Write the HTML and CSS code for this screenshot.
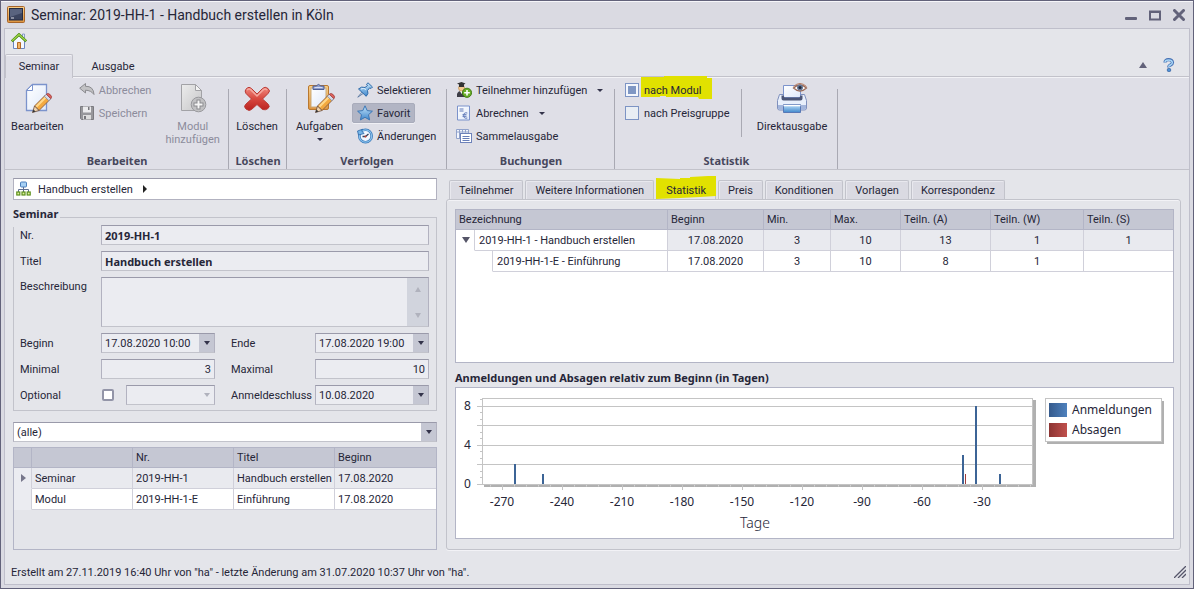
FILE: index.html
```html
<!DOCTYPE html>
<html lang="de">
<head>
<meta charset="utf-8">
<title>Seminar: 2019-HH-1 - Handbuch erstellen in Köln</title>
<link rel="stylesheet" href="styles.css">
</head>
<body>
<svg class="defs" width="0" height="0" aria-hidden="true">
  <defs>
    <linearGradient id="paper" x1="0" y1="0" x2="1" y2="1"><stop offset="0" stop-color="#fff"/><stop offset="1" stop-color="#dfe9fa"/></linearGradient>
    <linearGradient id="grey" x1="0" y1="0" x2="1" y2="1"><stop offset="0" stop-color="#ececec"/><stop offset="1" stop-color="#c6c6c8"/></linearGradient>
    <linearGradient id="red" x1="0" y1="0" x2="0" y2="1"><stop offset="0" stop-color="#f08a80"/><stop offset=".5" stop-color="#d8483f"/><stop offset="1" stop-color="#b9221f"/></linearGradient>
    <linearGradient id="blue" x1="0" y1="0" x2="0" y2="1"><stop offset="0" stop-color="#c4e4fa"/><stop offset="1" stop-color="#3f87cc"/></linearGradient>
    <linearGradient id="orange" x1="0" y1="0" x2="0" y2="1"><stop offset="0" stop-color="#f8d08a"/><stop offset="1" stop-color="#dd9440"/></linearGradient>
    <linearGradient id="barBlue"><stop offset="0" stop-color="#355a8c"/><stop offset="1" stop-color="#4f81bd"/></linearGradient>
    <linearGradient id="barRed"><stop offset="0" stop-color="#8c3432"/><stop offset="1" stop-color="#c0504d"/></linearGradient>
    <g id="pencil">
      <path d="M2 13.500L13 2.500l4.500 4.500L6.500 18z" fill="#f3a93f" stroke="#8a5a3a" stroke-width=".9"/>
      <path d="M3 13.500L13 3.500l1.500 1.500L4.500 15z" fill="#ffd88a"/>
      <path d="M11.800 3.700l4.500 4.500 2-2-4.500-4.500z" fill="#d5dbe8" stroke="#77809c" stroke-width=".7"/>
      <path d="M13.800 1.700q1.700-1.700 4 .5t.5 4z" fill="#e2645c" stroke="#9a3b3b" stroke-width=".8"/>
      <path d="M0 20l2-6.500 4.500 4.500z" fill="#f0d4ae" stroke="#6b4c3c" stroke-width=".8"/>
      <path d="M0 20l1-3 2 2z" fill="#333"/>
    </g>
  </defs>
</svg>
<div class="window">
  <header class="titlebar">
    <svg width="20" height="20" viewBox="0 0 20 20"><rect x="1.500" y="1.500" width="17" height="16" rx="1" fill="url(#orange)" stroke="#a8652a"/><rect x="3.500" y="3.500" width="13" height="11.500" fill="#3c4560" stroke="#262c42"/><path d="M4 4h12v4L4 12z" fill="#59637f"/><path d="M5 13h3" stroke="#d8d8e0"/></svg>
    <h1 class="title">Seminar: 2019-HH-1 - Handbuch erstellen in Köln</h1>
    <button class="bare" aria-label="Minimieren"><svg width="12" height="12"><rect y="8" width="12" height="3" rx="1" fill="#62627a"/></svg></button>
    <button class="bare" aria-label="Maximieren"><svg width="12" height="12"><path d="M1 3h10v7.500H1z" fill="none" stroke="#62627a" stroke-width="2"/><path d="M0 2.500h12" stroke="#62627a" stroke-width="2"/></svg></button>
    <button class="bare" aria-label="Schließen"><svg width="12" height="12"><path d="M1.500 1.500l9 9m0-9l-9 9" stroke="#62627a" stroke-width="3" stroke-linecap="round"/></svg></button>
  </header>
  <div class="client">
    <div class="quickbar">
      <button class="bare" aria-label="Start"><svg width="16" height="16" viewBox="0 0 16 16"><path d="M2.500 7.500v8h11v-8L8 2.500z" fill="#f4f8ff" stroke="#6c86c0"/><path d="M11.500 1h2v4h-2z" fill="#e8f0ff" stroke="#7389bd" stroke-width=".8"/><path d="M6.500 15.500v-6h3v6z" fill="#f2b467" stroke="#b46a25"/><path d="M.8 8.300L8 1.600l7.200 6.700" fill="none" stroke="#4b8a12" stroke-width="2.800"/><path d="M1.200 7.700L8 1.500l6.800 6.200" fill="none" stroke="#a2d84a" stroke-width="1.200"/></svg></button>
    </div>
    <nav class="ribbon-tabs">
      <button class="rtab active">Seminar</button>
      <button class="rtab">Ausgabe</button>
      <span class="spacer"></span>
      <button class="bare" aria-label="Menüband minimieren"><svg width="8" height="6"><path d="M0 6l4-6 4 6z" fill="#62627a"/></svg></button>
      <button class="bare" aria-label="Hilfe"><svg width="12" height="14" viewBox="0 0 12 14"><path d="M2 4.500Q2 1.700 5.500 1.700T9.500 4.500Q9.500 6 7.500 7T6 9.300" fill="none" stroke="#4470b4" stroke-width="3.200"/><path d="M2 4.300Q2 1.900 5.500 1.900T9.400 4.500Q9.400 6 7.400 7T6 9" fill="none" stroke="#a9d6f5" stroke-width="1.500"/><circle cx="6" cy="12" r="1.800" fill="#4e92d6" stroke="#315d9e" stroke-width=".7"/></svg></button>
    </nav>
    <div class="ribbon">
      <section class="rgroup g-edit">
        <div class="rbody">
          <button class="big"><svg width="32" height="32" viewBox="0 0 32 32"><path d="M5.500 8.500l6-6h14v26h-20z" fill="url(#paper)" stroke="#7b93cc" stroke-width="1.300"/><path d="M5.500 8.500h6v-6z" fill="#fff" stroke="#7b93cc"/><use href="#pencil" x="11.500" y="10.500"/></svg><span>Bearbeiten</span></button>
          <div class="stack">
            <button class="small off"><svg width="16" height="16" viewBox="0 0 16 16"><path d="M.7 6.200L6.500 1.500v2.800Q14.500 4 15 12.500 12 8.300 6.500 8.200v2.800z" fill="#c2c2c4" stroke="#8c8c90"/></svg>Abbrechen</button>
            <button class="small off"><svg width="16" height="16" viewBox="0 0 16 16"><path d="M1.500 1.500h13v13h-12l-1-1z" fill="#97979b" stroke="#7b7b80"/><rect x="4" y="1.500" width="8" height="6" fill="#ececee"/><rect x="4" y="10" width="8" height="4.500" fill="#ddd"/><rect x="9" y="2" width="1.500" height="3" fill="#77777c"/><rect x="5" y="11" width="2" height="3" fill="#77777c"/></svg>Speichern</button>
          </div>
          <button class="big off"><svg width="32" height="32" viewBox="0 0 32 32"><path d="M4.500 2.500h14l6 6v20h-20z" fill="url(#grey)" stroke="#a2a2a6"/><path d="M18.500 2.500v6h6z" fill="#f4f4f4" stroke="#a2a2a6"/><circle cx="21.500" cy="22.500" r="7.300" fill="#c1c1c3" stroke="#98989c"/><path d="M21.500 17.500v10M16.500 22.500h10" stroke="#8b8b8f" stroke-width="4"/><path d="M21.500 18.500v8M17.500 22.500h8" stroke="#f5f5f5" stroke-width="2"/></svg><span>Modul<br>hinzufügen</span></button>
        </div>
        <h2>Bearbeiten</h2>
      </section>
      <section class="rgroup g-delete">
        <div class="rbody"><button class="big"><svg width="32" height="32" viewBox="0 0 32 32"><path d="M5.500 6.500Q8 4 10.500 6.500L16 12l5.500-5.500Q24 4 27 6.500t0 5l-5.500 5.500L27 22q2.500 2.500 0 4.500t-5.500 1L16 22.500 10.500 27.500Q8 29.500 5 27t0-5l5.500-5L5 11.500Q3 9 5.500 6.500z" fill="url(#red)" stroke="#b93a35"/><path d="M6 8q2-2 4 0l6 6 6-6q2-2 4 0" fill="none" stroke="#f4a89f" stroke-width="1.500"/></svg><span>Löschen</span></button></div>
        <h2>Löschen</h2>
      </section>
      <section class="rgroup g-track">
        <div class="rbody">
          <button class="big"><svg width="32" height="32" viewBox="0 0 32 32"><rect x="4.500" y="3.500" width="20" height="24" rx="1.500" fill="url(#orange)" stroke="#b9782f"/><rect x="7" y="6" width="15" height="19" fill="url(#paper)" stroke="#c9ab7d"/><path d="M9 7.500V4h3.500Q14.500.8 16.500 4H20v3.500z" fill="#8d9ecf" stroke="#4e5f94"/><path d="M10.500 5.500h8" stroke="#d7def4"/><use href="#pencil" x="11.500" y="10.500"/></svg><span>Aufgaben</span><i class="caret"></i></button>
          <div class="stack">
            <button class="small"><svg width="16" height="16" viewBox="0 0 16 16"><path d="M.8 15.200l5-6L7.300 10.700z" fill="#eee" stroke="#59769f" stroke-width=".9"/><path d="M1.500 7Q4.500 4 8 5.500L10.500 3.500l-1-1.300L11 .8l4.500 4.200-1.500 1.500-1.300-.7L10.500 8.500q1.500 3-1.300 5.800z" fill="url(#blue)" stroke="#2f6aa9"/><path d="M4 7q3-1.500 5 .5" stroke="#e3f2fd" fill="none"/></svg>Selektieren</button>
            <button class="small pressed"><svg width="16" height="16" viewBox="0 0 16 16"><path d="M8 .8l2.200 4.800 5.200.6-3.900 3.500 1.100 5.200L8 12.300l-4.600 2.600 1.100-5.200L.6 6.200l5.200-.6z" fill="url(#blue)" stroke="#3b76b5"/></svg>Favorit</button>
            <button class="small"><svg width="16" height="16" viewBox="0 0 16 16"><circle cx="8.500" cy="8" r="6.200" fill="#f3f8ff" stroke="#3877b8" stroke-width="2.600"/><circle cx="8.500" cy="8" r="6.200" fill="none" stroke="#8cc3ee" stroke-width="1.200"/><path d="M11.500 6L8.500 8.500H5.500" fill="none" stroke="#31415e" stroke-width="1.300"/><circle cx="8.500" cy="8.500" r="1" fill="#c43"/><path d="M.5 3l5-1.800-.8 2 2.500 2.300-5.700 1.500z" fill="#75b5e8" stroke="#2d67a7" stroke-width=".8"/></svg>Änderungen</button>
          </div>
        </div>
        <h2>Verfolgen</h2>
      </section>
      <section class="rgroup g-book">
        <div class="rbody">
          <div class="stack">
            <button class="small"><svg width="16" height="16" viewBox="0 0 16 16"><path d="M1 15v-3q1-3 4-3t4 3v3z" fill="#3d3d46"/><path d="M4 9l1.500 3L7 9z" fill="#fff"/><circle cx="5.500" cy="6" r="3" fill="#f3c98e" stroke="#b98143" stroke-width=".6"/><path d="M1 1.500L5.500 0l4 1.500L8 2.500v2.500H3V2.500z" fill="#333"/><circle cx="11" cy="10.800" r="4.600" fill="#69ad28" stroke="#3c7811" stroke-width=".9"/><path d="M11 8v5.600M8.200 10.800h5.600" stroke="#fff" stroke-width="1.600"/></svg>Teilnehmer hinzufügen<i class="caret"></i></button>
            <button class="small"><svg width="16" height="16" viewBox="0 0 16 16"><path d="M1.500 1h12v14h-12z" fill="url(#paper)" stroke="#7b92cb"/><path d="M3.500 4h4M3.500 6h4" stroke="#5f79b8"/><path d="M11.300 8Q7.700 7 7.700 10.500t3.600 2.500M6.500 9.700h4M6.500 11.300h4" fill="none" stroke="#5f79b8"/></svg>Abrechnen<i class="caret"></i></button>
            <button class="small"><svg width="16" height="16" viewBox="0 0 16 16"><path d="M.5 1.500h12v9H.5zM.5 4h12M3.500 1.500v9M6.500 1.500v3M9.500 1.500v3" fill="#f3f6fd" stroke="#91a2cb"/><rect x="4.500" y="5.500" width="11" height="9" fill="#fff" stroke="#6d82ba"/><path d="M6.500 8.500h7M6.500 10.500h7M6.500 12.500h7" stroke="#667db8"/></svg>Sammelausgabe</button>
          </div>
        </div>
        <h2>Buchungen</h2>
      </section>
      <section class="rgroup g-stat">
        <div class="rbody">
          <div class="stack">
            <label class="rcheck"><input type="checkbox" checked><span class="marked"><svg class="marker" width="71" height="23" viewBox="0 0 71 23"><path d="M0 1h23V0h43v2h5v21H58l-1-2H25v-1h-6v1H0z" fill="#e1e100"/></svg><span class="mtext">nach Modul</span></span></label>
            <label class="rcheck"><input type="checkbox"><span>nach Preisgruppe</span></label>
          </div>
          <span class="vline"></span>
          <button class="big"><svg width="32" height="32" viewBox="0 0 32 32"><path d="M3.500 12.500h25l2 6v7.500q0 2-2 2h-25q-2 0-2-2v-7.500z" fill="#e8effb" stroke="#7f90bd"/><path d="M2 23h28v3q0 2-2 2H4q-2 0-2-2z" fill="#a4b6dc"/><path d="M7.500 3.500h17v12h-17z" fill="url(#paper)" stroke="#7b93cc"/><path d="M5.500 13.500h2l1 2h15l1-2h2v3q0 2-2 2h-17q-2 0-2-2z" fill="#4c5676"/><path d="M7.500 22.500h17v8h-17z" fill="url(#blue)" stroke="#5878b6"/><path d="M7.500 23.500h17" stroke="#fff" stroke-width="1.500"/><path d="M17.500 6q6.500-6 13 0-6.500 6-13 0z" fill="#fff" stroke="#9c6b58" stroke-width="1.300"/><path d="M17.500 4.500q6.500-6 13 0" fill="none" stroke="#b77b60"/><circle cx="24" cy="5.500" r="3" fill="#667897"/><circle cx="24" cy="5.500" r="1.500" fill="#1f2535"/></svg><span>Direktausgabe</span></button>
        </div>
        <h2>Statistik</h2>
      </section>
    </div>

    <main class="content">
      <div class="left">
        <nav class="crumbs">
          <svg width="16" height="16" viewBox="0 0 16 16"><rect x="4.500" y="1" width="6" height="5" rx="1" fill="#a6d0f4" stroke="#4b7fbd"/><path d="M7.500 6v5M2.500 11V8.500h10V11" fill="none" stroke="#5f6f93"/><g fill="#dff09c" stroke="#5b8f1b" stroke-width="1.200"><rect x=".8" y="11" width="3" height="3"/><rect x="6" y="11" width="3" height="3"/><rect x="11.200" y="11" width="3" height="3"/></g></svg>
          <a href="#">Handbuch erstellen</a>
          <svg width="4" height="8"><path d="M0 0l4 4-4 4z" fill="#222"/></svg>
        </nav>
        <fieldset class="form">
          <legend>Seminar</legend>
          <div class="fields">
            <label for="nr">Nr.</label><input id="nr" class="box strong wide" value="2019-HH-1" readonly>
            <label for="titel">Titel</label><input id="titel" class="box strong wide" value="Handbuch erstellen" readonly>
            <label for="desc" class="top">Beschreibung</label>
            <div class="box area wide"><textarea id="desc" readonly></textarea><span class="scroll"><i class="tri up"></i><i class="tri down"></i></span></div>
            <label for="beg">Beginn</label><div class="box combo"><input id="beg" value="17.08.2020 10:00"><button aria-label="Beginn wählen"><i class="caret"></i></button></div>
            <label for="end" class="second">Ende</label><div class="box combo"><input id="end" value="17.08.2020 19:00"><button aria-label="Ende wählen"><i class="caret"></i></button></div>
            <label for="min">Minimal</label><input id="min" class="box num" value="3">
            <label for="max" class="second">Maximal</label><input id="max" class="box num" value="10">
            <label for="opt">Optional</label>
            <div class="optional"><input type="checkbox" id="opt"><div class="box combo disabled"><select aria-label="Optionsgruppe" disabled><option></option></select><span class="drop"><i class="caret"></i></span></div></div>
            <label for="dead" class="second">Anmeldeschluss</label><div class="box combo"><input id="dead" value="10.08.2020"><button aria-label="Anmeldeschluss wählen"><i class="caret"></i></button></div>
          </div>
        </fieldset>
        <div class="box combo filter"><select aria-label="Filter"><option>(alle)</option></select><span class="drop"><i class="caret"></i></span></div>
        <div class="grid modules">
          <table>
            <colgroup><col class="c-mark"><col><col><col><col></colgroup>
            <thead><tr><th></th><th></th><th>Nr.</th><th>Titel</th><th>Beginn</th></tr></thead>
            <tbody>
              <tr class="sel"><td class="mark"><svg width="5" height="8"><path d="M0 0l5 4-5 4z" fill="#77778b"/></svg></td><td>Seminar</td><td>2019-HH-1</td><td>Handbuch erstellen</td><td>17.08.2020</td></tr>
              <tr><td class="mark"></td><td>Modul</td><td>2019-HH-1-E</td><td>Einführung</td><td>17.08.2020</td></tr>
            </tbody>
          </table>
        </div>
      </div>

      <div class="right">
        <nav class="tabs">
          <button>Teilnehmer</button><button>Weitere Informationen</button>
          <button class="active"><svg class="marker" width="60" height="23" viewBox="0 0 60 23"><path d="M0 2l24 1V2h10V1l18-1h8v20l-16 1-20 1-24 1z" fill="#e1e100"/></svg><span class="mtext">Statistik</span></button>
          <button>Preis</button><button>Konditionen</button><button>Vorlagen</button><button>Korrespondenz</button>
        </nav>
        <section class="tabpanel">
          <div class="grid stats">
            <table>
              <colgroup><col class="w19"><col class="w18"><col><col class="w96"><col class="w67"><col class="w70"><col class="w90"><col class="w93"><col class="w89"></colgroup>
              <thead><tr><th colspan="3">Bezeichnung</th><th>Beginn</th><th>Min.</th><th>Max.</th><th>Teiln. (A)</th><th>Teiln. (W)</th><th>Teiln. (S)</th></tr></thead>
              <tbody>
                <tr class="sel"><td class="tree"><button class="bare" aria-label="Zuklappen"><svg width="8" height="6"><path d="M0 0h8L4 6z" fill="#555568"/></svg></button></td><td class="name" colspan="2">2019-HH-1 - Handbuch erstellen</td><td>17.08.2020</td><td>3</td><td>10</td><td>13</td><td>1</td><td>1</td></tr>
                <tr><td class="tree" colspan="2"></td><td class="name">2019-HH-1-E - Einführung</td><td>17.08.2020</td><td>3</td><td>10</td><td>8</td><td>1</td><td></td></tr>
              </tbody>
            </table>
          </div>
          <h3>Anmeldungen und Absagen relativ zum Beginn (in Tagen)</h3>
          <div class="chart">
            <svg viewBox="0 0 717 150" role="img" aria-label="Anmeldungen und Absagen">
              <path d="M577 12h3v87H28v-3h549z" fill="#b0b0b0"/>
              <path d="M34 97.500h546" stroke="#d4d4d4" stroke-width="2" stroke-dasharray="1 11"/>
              <rect x="26.500" y="10.500" width="550" height="86" fill="#fff" stroke="#c4c4c4"/>
              <path d="M21 18.500h555M21 37.500h555M21 57.500h555M21 76.500h555M21 96.500h555M24 11.500h3M24 24.500h3M24 31.500h3M24 44.500h3M24 50.500h3M24 63.500h3M24 70.500h3M24 83.500h3M24 89.500h3M46.500 97v5M106.500 97v5M166.500 97v5M226.500 97v5M286.500 97v5M346.500 97v5M406.500 97v5M466.500 97v5M526.500 97v5" stroke="#c4c4c4"/>
              <g fill="#3c6496"><path d="M58 76h2v20h-2zM86 86h2v10h-2zM506 67h2v29h-2zM519 18h2v78h-2zM543 86h2v10h-2z"/></g>
              <path d="M509 86h1v10h-1z" fill="#a03c3a"/>
              <g class="axis"><text x="8" y="22">8</text><text x="8" y="61">4</text><text x="8" y="100">0</text></g>
              <g class="axis mid"><text x="46" y="118">-270</text><text x="106" y="118">-240</text><text x="166" y="118">-210</text><text x="226" y="118">-180</text><text x="286" y="118">-150</text><text x="346" y="118">-120</text><text x="406" y="118">-90</text><text x="466" y="118">-60</text><text x="526" y="118">-30</text></g>
              <text class="axis-title" x="299" y="140">Tage</text>
              <path d="M591 13h117v43H591z" fill="#b0b0b0"/>
              <rect x="589.500" y="10.500" width="116" height="43" fill="#fff" stroke="#c4c4c4"/>
              <rect x="593" y="15" width="18" height="14" fill="url(#barBlue)"/><rect x="593" y="35" width="18" height="14" fill="url(#barRed)"/>
              <g class="legend"><text x="616" y="26">Anmeldungen</text><text x="616" y="46">Absagen</text></g>
            </svg>
          </div>
        </section>
      </div>
    </main>
    <footer class="status"><span>Erstellt am 27.11.2019 16:40 Uhr von "ha" - letzte Änderung am 31.07.2020 10:37 Uhr von "ha".</span>
      <svg width="12" height="12"><path d="M0 12L12 0M4 12l8-8M8 12l4-4" stroke="#55556a" stroke-width="1.300"/></svg>
    </footer>
  </div>
</div>
</body>
</html>
```
FILE: styles.css
```css
* { box-sizing: border-box; }
body { margin: 0; font: 11px/15px Roboto, "Noto Sans", sans-serif; color: #262638; }
button, input, select, textarea { font: inherit; color: inherit; margin: 0; padding: 0; border: 0; background: none; border-radius: 0; }
svg { display: block; flex: none; }
.defs { position: absolute; }
h1, h2, h3 { margin: 0; font-size: 11px; }
h2, h3, legend, .strong, text { font-family: "Noto Sans", sans-serif; }
.bare { display: flex; align-items: center; justify-content: center; }

.window { min-height: 100vh; display: flex; flex-direction: column; border: 1px solid #62627a; background: #dadae2; box-shadow: inset 0 1px #f6f6fa; }
.titlebar { display: flex; align-items: center; height: 27px; padding: 1px 8px 0 5px; gap: 12px; }
.title { flex: 1; margin-left: -7px; font-size: 14px; line-height: 20px; font-weight: 400; }
.client { flex: 1; display: flex; flex-direction: column; margin: 0 3px 3px; border: 1px solid #bfbfcb; background: #e4e5ea; }

.quickbar { display: flex; align-items: center; height: 25px; padding: 0 6px 2px; }
.ribbon-tabs { display: flex; align-items: center; height: 23px; padding-right: 14px; border-bottom: 1px solid #c2c2ca; }
.rtab { align-self: stretch; width: 80px; padding-top: 2px; }
.rtab.active { width: 68px; height: 24px; border: 1px solid #c2c2ca; border-bottom: 0; border-radius: 2px 2px 0 0; background: #dfdfe7; box-shadow: inset 0 1px #f2f2f6; position: relative; padding: 0; }
.spacer { flex: 1; }
.ribbon-tabs .bare + .bare { margin-left: 16px; }

.ribbon { display: flex; height: 93px; background: #dfdfe7; border-bottom: 1px solid #c2c2ca; box-shadow: inset 0 1px #f2f2f6; }
.rgroup { display: flex; flex-direction: column; justify-content: space-between; padding: 3px 0 1px; background: linear-gradient(#a9a9b3, #a9a9b3) right 12px / 1px 80px no-repeat; }
.rgroup h2 { text-align: center; color: #47475c; line-height: 15px; }
.rbody { display: flex; align-items: flex-start; }
.g-edit { width: 224px; }
.g-delete { width: 58px; }
.g-track { width: 160px; }
.g-book { width: 168px; }
.g-stat { width: 223px; }
.big { display: flex; flex-direction: column; align-items: center; width: 66px; line-height: 13px; padding-top: 2px; white-space: nowrap; }
.big svg { margin-bottom: 6px; }
.g-edit .big:last-child { margin-left: auto; width: 74px; }
.g-delete .big { width: 56px; }
.g-track .big { width: 65px; }
.big .caret { margin-top: 5px; }
.stack { display: flex; flex-direction: column; align-items: flex-start; gap: 3px; }
.g-edit .stack, .g-book .stack { margin-left: 4px; }
.small { display: flex; align-items: center; gap: 4px; height: 20px; padding: 0 4px; border: 1px solid transparent; border-radius: 2px; white-space: nowrap; }
.small.pressed { background: #b2b5c4; border-color: #a9acbb; box-shadow: 0 1px #f0f0f5; }
.small .caret { margin-left: 6px; }
.off { color: #8c8c9c; }
.caret { width: 0; border: 3px solid transparent; border-top-color: #33334a; border-bottom: 0; }

.rcheck { display: flex; align-items: center; gap: 5px; height: 20px; margin-left: 10px; white-space: nowrap; }
.rcheck input { appearance: none; width: 14px; height: 14px; border: 1px solid #7d94c4; background: #e9eef4; }
.rcheck input:checked { background: #7f97c4; box-shadow: inset 0 0 0 2px #f3f6fc; }
.marked { position: relative; }
.marker { position: absolute; left: -3px; top: -7px; }
.mtext { position: relative; }
.vline { width: 1px; height: 48px; margin: 9px 16px 0 auto; background: #a9a9b3; }
.g-stat .big { width: 68px; margin-right: 12px; }

.content { flex: 1; display: grid; grid-template-columns: minmax(0, 424fr) minmax(0, 735fr); gap: 9px; padding: 8px 8px 0; }
.left { display: flex; flex-direction: column; }
.crumbs { display: flex; align-items: center; gap: 6px; height: 22px; padding: 0 3px 0 2px; background: #fff; border: 1px solid #b2b2c0; border-top-color: #9a9aaa; }
.crumbs a { color: inherit; text-decoration: none; margin-right: 4px; }

.form { margin: 7px 0 0; padding: 0 7px 5px 6px; border: 1px solid #c2c3cb; min-width: 0; }
.form legend { margin-left: -7px; padding: 0 2px 6px 0; font-weight: 700; line-height: 14px; }
.fields { display: grid; grid-template-columns: 81px minmax(0, 1fr) 100px minmax(0, 1fr); row-gap: 6px; align-items: center; margin-top: -2px; }
.top { align-self: start; padding-top: 2px; }
.second { padding-left: 16px; }
.wide { grid-column: 2 / 5; }
.box { height: 20px; min-width: 0; width: 100%; padding: 0 3px; background: #ebecf1; border: 1px solid #b2b2c0; border-top-color: #9a9aaa; border-bottom-color: #c2c3cb; }
.strong { font-weight: 700; line-height: 14px; }
.num { text-align: right; }
.area { height: 50px; display: flex; padding: 0; }
.area textarea { flex: 1; resize: none; overflow: hidden; outline: 0; }
.scroll { display: flex; flex-direction: column; align-items: center; justify-content: space-between; width: 21px; padding: 9px 0 8px; background: #d1d4dd; }
.tri { border: 3px solid transparent; }
.up { border-top: 0; border-bottom: 5px solid #b0b2bd; }
.down { border-bottom: 0; border-top: 5px solid #b0b2bd; }
.combo { display: flex; padding: 0 0 0 3px; }
.combo input, .combo select { flex: 1; min-width: 0; width: 0; appearance: none; }
.combo button, .drop { display: flex; align-items: center; justify-content: center; width: 15px; background: #c5c7d3; }
.combo .caret { border-top-width: 4px; }
.disabled .drop { background: none; }
.disabled .caret { border-top-color: #b0b2bd; }
.optional { display: flex; align-items: center; gap: 12px; }
.optional input { appearance: none; flex: none; width: 12px; height: 12px; margin-left: 1px; border: 2px solid #9395a8; border-radius: 2px; background: #fff; }
.filter { margin-top: 11px; background: #fff; }

.grid { border: 1px solid #b3b5c6; }
.modules { flex: 1; margin-top: 5px; }
table { width: 100%; table-layout: fixed; border-collapse: separate; border-spacing: 0; }
th, td { height: 21px; padding: 0 0 0 3px; text-align: left; font-weight: 400; white-space: nowrap; border-right: 1px solid #d0d0da; border-bottom: 1px solid #d0d0da; background: #fff; }
th { height: 20px; background: #c5c7d3; border-color: #b3b5c6; }
th:last-child, td:last-child { border-right: 0; }
.sel td { background: #e9eaef; }
.c-mark { width: 18px; }
.modules td.mark { background: #ebecf1; padding-left: 7px; border-bottom-color: #ebecf1; }

.tabs { display: flex; gap: 2px; padding: 2px 0 0 3px; }
.tabs button { position: relative; height: 19px; padding: 0 9px; border: 1px solid #c2c3cb; border-bottom: 0; border-radius: 2px 2px 0 0; background: #dadae2; box-shadow: inset 1px 1px #e8e8ee; white-space: nowrap; }
.tabs .active { background: #e4e5ea; }
.tabs .marker { left: -1px; top: -5px; }
.right { display: flex; flex-direction: column; }
.tabpanel { flex: 1; display: flex; flex-direction: column; padding: 9px 6px 10px 8px; border: 1px solid #c2c3cb; border-radius: 3px; box-shadow: inset 0 1px #f2f2f6, 0 1px #f2f2f6; }
.stats { flex: 1; min-height: 154px; background: #fff; }
.stats td { text-align: center; padding: 0; }
.stats td.name { text-align: left; padding-left: 4px; background: #fff; }
.stats td.tree { background: #fff; border-bottom-color: #fff; padding-left: 6px; }
.w19 { width: 19px; } .w18 { width: 18px; } .w96 { width: 96px; } .w67 { width: 67px; }
.w70 { width: 70px; } .w89 { width: 89px; } .w90 { width: 90px; } .w93 { width: 93px; }
h3 { margin: 8px 0 2px; line-height: 14px; }
.chart { background: #fff; border: 1px solid #b3b5c6; }
.chart svg { width: 100%; }
text { fill: #262638; }
.axis, .legend { font-size: 12px; }
.mid, .axis-title { text-anchor: middle; }
.axis-title { font-size: 14px; font-weight: 300; }

.status { display: flex; justify-content: space-between; align-items: center; height: 34px; padding: 10px 3px 0 6px; }
```
